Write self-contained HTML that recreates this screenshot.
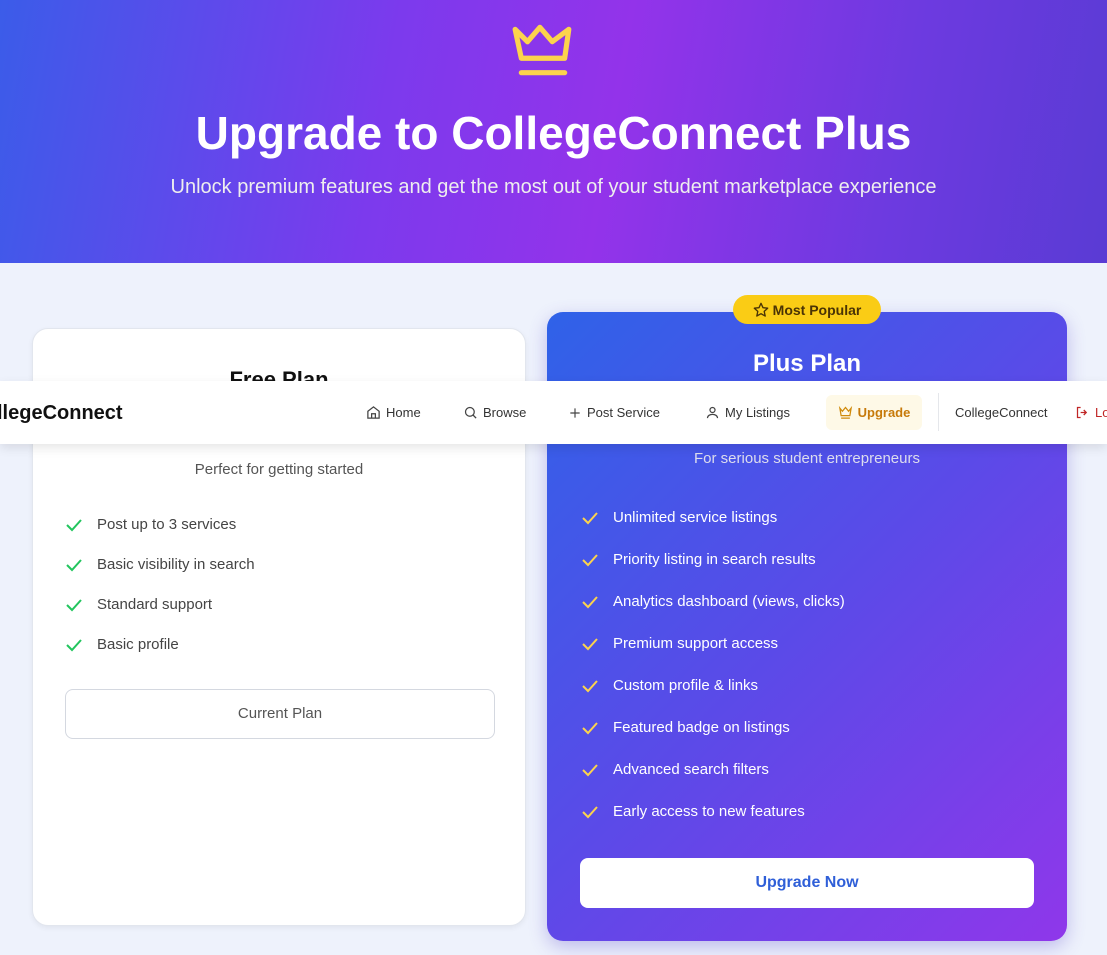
<!DOCTYPE html><html><head><style>
*{box-sizing:border-box;margin:0;padding:0}
body{width:1107px;height:955px;overflow:hidden;font-family:"Liberation Sans",sans-serif;background:#eef2fc;position:relative}
.hero{position:absolute;left:0;top:0;width:1107px;height:263px;background:linear-gradient(100deg,#3b5ce9 0%,#7c3aed 35%,#9333ea 55%,#6d3ae0 80%,#5a3bd4 100%);color:#fff;text-align:center}
.hero h1{position:absolute;top:106px;width:100%;font-size:46px;font-weight:bold}
.hero p{position:absolute;top:176px;width:100%;font-size:20px;color:#eee}
.card{position:absolute;border-radius:16px}
.free{left:32px;top:328px;width:494px;height:598px;background:#fff;border:1px solid #e2e6ee;box-shadow:0 2px 6px rgba(0,0,0,.06)}
.plus{left:547px;top:312px;width:520px;height:629px;background:linear-gradient(135deg,#2f62e8 0%,#5b4ae8 50%,#8f37ea 100%);box-shadow:0 6px 18px rgba(80,60,200,.3);color:#fff}
.li{position:absolute;font-size:15px;display:flex;align-items:center}
.li svg{margin-right:14px}
.free .li{color:#444}
.nav{position:absolute;left:0;top:381px;width:1107px;height:63px;background:#fff;box-shadow:0 4px 10px rgba(0,0,0,.1);font-size:13px;color:#333}
.nav span{position:absolute;top:24px;display:flex;align-items:center;gap:5px}
</style></head><body>
<div class="hero">
<svg style="position:absolute;left:511px;top:23px" width="64" height="54" viewBox="0 0 62 52" fill="none" stroke="#fcd34d" stroke-width="5" stroke-linecap="round" stroke-linejoin="round"><path d="M4 6 L16 18 L28 4 L40 18 L56 6 L52 34 L10 34 Z"/><path d="M10 48 H52"/></svg>
<h1>Upgrade to CollegeConnect Plus</h1>
<p>Unlock premium features and get the most out of your student marketplace experience</p>
</div>
<div class="card free">
<div style="position:absolute;top:38px;width:100%;text-align:center;font-size:22px;font-weight:bold;color:#111">Free Plan</div>
<div style="position:absolute;top:132px;width:100%;text-align:center;font-size:15px;color:#555">Perfect for getting started</div>
<div class="li" style="left:32px;top:187px"><svg width="18" height="14" viewBox="0 0 18 14"><path d="M2 7l5 5L16 2" stroke="#22c55e" stroke-width="2" fill="none"/></svg>Post up to 3 services</div>
<div class="li" style="left:32px;top:227px"><svg width="18" height="14" viewBox="0 0 18 14"><path d="M2 7l5 5L16 2" stroke="#22c55e" stroke-width="2" fill="none"/></svg>Basic visibility in search</div>
<div class="li" style="left:32px;top:267px"><svg width="18" height="14" viewBox="0 0 18 14"><path d="M2 7l5 5L16 2" stroke="#22c55e" stroke-width="2" fill="none"/></svg>Standard support</div>
<div class="li" style="left:32px;top:307px"><svg width="18" height="14" viewBox="0 0 18 14"><path d="M2 7l5 5L16 2" stroke="#22c55e" stroke-width="2" fill="none"/></svg>Basic profile</div>
<div style="position:absolute;left:32px;top:360px;width:430px;height:50px;border:1px solid #d4d8e0;border-radius:8px;text-align:center;line-height:48px;font-size:15px;color:#555">Current Plan</div>
</div>
<div class="card plus">
<div style="position:absolute;top:38px;width:100%;text-align:center;font-size:24px;font-weight:bold">Plus Plan</div>
<div style="position:absolute;top:138px;width:100%;text-align:center;font-size:15px;color:#dde">For serious student entrepreneurs</div>
<div class="li" style="left:34px;top:197px"><svg width="18" height="14" viewBox="0 0 18 14"><path d="M2 7l5 5L16 2" stroke="#fcd34d" stroke-width="2" fill="none"/></svg>Unlimited service listings</div>
<div class="li" style="left:34px;top:239px"><svg width="18" height="14" viewBox="0 0 18 14"><path d="M2 7l5 5L16 2" stroke="#fcd34d" stroke-width="2" fill="none"/></svg>Priority listing in search results</div>
<div class="li" style="left:34px;top:281px"><svg width="18" height="14" viewBox="0 0 18 14"><path d="M2 7l5 5L16 2" stroke="#fcd34d" stroke-width="2" fill="none"/></svg>Analytics dashboard (views, clicks)</div>
<div class="li" style="left:34px;top:323px"><svg width="18" height="14" viewBox="0 0 18 14"><path d="M2 7l5 5L16 2" stroke="#fcd34d" stroke-width="2" fill="none"/></svg>Premium support access</div>
<div class="li" style="left:34px;top:365px"><svg width="18" height="14" viewBox="0 0 18 14"><path d="M2 7l5 5L16 2" stroke="#fcd34d" stroke-width="2" fill="none"/></svg>Custom profile &amp; links</div>
<div class="li" style="left:34px;top:407px"><svg width="18" height="14" viewBox="0 0 18 14"><path d="M2 7l5 5L16 2" stroke="#fcd34d" stroke-width="2" fill="none"/></svg>Featured badge on listings</div>
<div class="li" style="left:34px;top:449px"><svg width="18" height="14" viewBox="0 0 18 14"><path d="M2 7l5 5L16 2" stroke="#fcd34d" stroke-width="2" fill="none"/></svg>Advanced search filters</div>
<div class="li" style="left:34px;top:491px"><svg width="18" height="14" viewBox="0 0 18 14"><path d="M2 7l5 5L16 2" stroke="#fcd34d" stroke-width="2" fill="none"/></svg>Early access to new features</div>
<div style="position:absolute;left:33px;top:546px;width:454px;height:50px;background:#fff;border-radius:8px;text-align:center;line-height:50px;font-size:16px;font-weight:bold;color:#2f5fd8">Upgrade Now</div>
</div>
<div style="position:absolute;left:733px;top:295px;width:148px;height:29px;background:#facc15;border-radius:15px;font-size:14px;font-weight:bold;color:#4a3305;display:flex;align-items:center;justify-content:center;gap:4px"><svg width="16" height="16" viewBox="0 0 24 24" fill="none" stroke="#4a3305" stroke-width="2" stroke-linejoin="round"><path d="M12 2l3 6.5 7 .8-5.2 4.8 1.5 7L12 17.5 5.7 21l1.5-7L2 9.3l7-.8z"/></svg>Most Popular</div>
<div class="nav">
<span style="left:-3px;top:21px;font-size:20px;font-weight:bold;color:#111">llegeConnect</span>
<span style="left:366px"><svg width="15" height="15" viewBox="0 0 24 24" fill="none" stroke="#444" stroke-width="2"><path d="M3 10l9-7 9 7v11H3z M9 21v-7h6v7"/></svg>Home</span>
<span style="left:463px"><svg width="15" height="15" viewBox="0 0 24 24" fill="none" stroke="#444" stroke-width="2"><circle cx="11" cy="11" r="7"/><path d="M16 16l5 5"/></svg>Browse</span>
<span style="left:568px"><svg width="14" height="14" viewBox="0 0 24 24" stroke="#444" stroke-width="2"><path d="M12 4v16M4 12h16"/></svg>Post Service</span>
<span style="left:705px"><svg width="15" height="15" viewBox="0 0 24 24" fill="none" stroke="#444" stroke-width="2"><circle cx="12" cy="8" r="4"/><path d="M4 21c0-4 4-6 8-6s8 2 8 6"/></svg>My Listings</span>
<span style="left:826px;top:14px;height:35px;width:96px;background:#fef9e7;border-radius:6px;justify-content:center;color:#c77a0a;font-weight:bold"><svg width="15" height="15" viewBox="0 0 24 24" fill="none" stroke="#d08a0a" stroke-width="2"><path d="M3 5l4 5 5-6 5 6 4-5-2 12H5z M5 21h14"/></svg>Upgrade</span>
<div style="position:absolute;left:938px;top:12px;width:1px;height:38px;background:#e5e7eb"></div>
<span style="left:955px">CollegeConnect</span>
<span style="left:1075px;color:#c02626"><svg width="15" height="15" viewBox="0 0 24 24" fill="none" stroke="#c02626" stroke-width="2"><path d="M9 4H4v16h5M14 8l4 4-4 4M18 12H9"/></svg>Lo</span>
</div>
</body></html>
